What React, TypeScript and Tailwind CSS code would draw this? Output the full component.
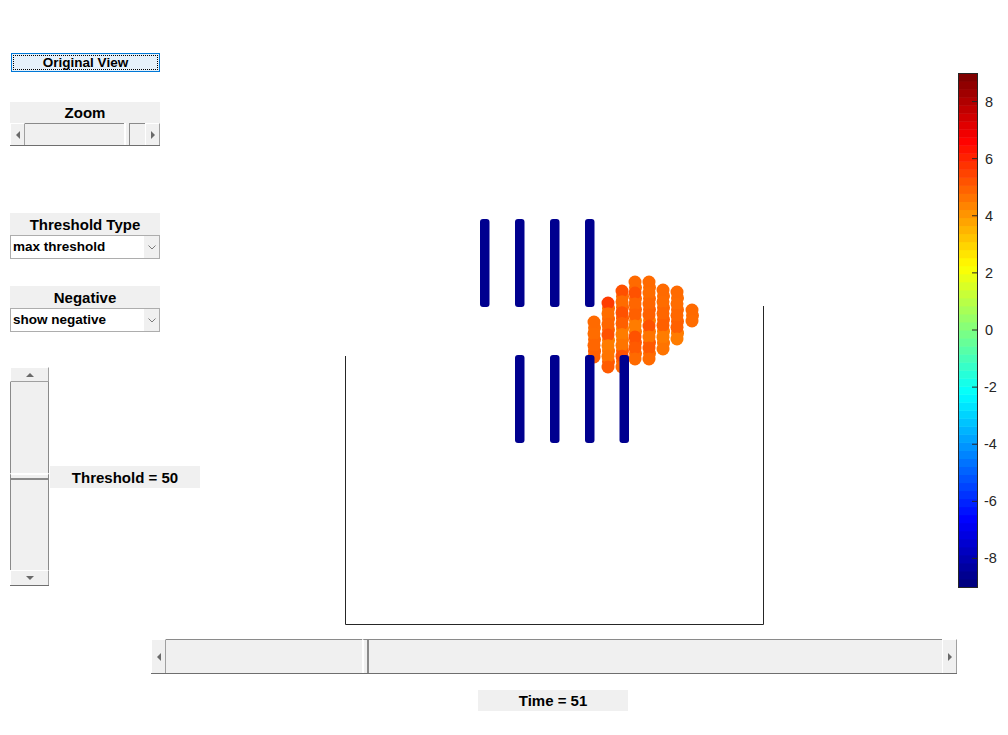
import React from 'react';

const jet = (x: number) => {
  const c = (v: number) => Math.round(Math.max(0, Math.min(1, v)) * 255);
  const r = c(1.5 - Math.abs(4 * x - 3));
  const g = c(1.5 - Math.abs(4 * x - 2));
  const b = c(1.5 - Math.abs(4 * x - 1));
  return `rgb(${r},${g},${b})`;
};

function Arrow({ dir }: { dir: 'l' | 'r' | 'u' | 'd' }) {
  const pts = { l: '4,0 4,8 0,4', r: '0,0 0,8 4,4', u: '0,4 8,4 4,0', d: '0,0 8,0 4,4' }[dir];
  const vert = dir === 'u' || dir === 'd';
  return (
    <svg width={vert ? 8 : 4} height={vert ? 4 : 8} className="block">
      <polygon points={pts} fill="#6a6a6a" />
    </svg>
  );
}

function Label({ text, className }: { text: string; className: string }) {
  return (
    <div className={`bg-[#f0f0f0] flex items-center justify-center text-[15px] font-bold text-black leading-none ${className}`}>
      {text}
    </div>
  );
}

function Select({ value }: { value: string }) {
  return (
    <div className="flex h-[24px] w-[150px] border border-[#adadad] bg-white">
      <div className="flex-1 flex items-center pl-[2px] text-[13.5px] font-bold text-black">{value}</div>
      <div className="w-[15px] bg-[#f0f0f0] flex items-center justify-center">
        <svg width="8" height="5" className="block">
          <polyline points="0.5,0.5 4,4 7.5,0.5" fill="none" stroke="#7a7a7a" strokeWidth="1" />
        </svg>
      </div>
    </div>
  );
}

const btn = 'flex items-center justify-center bg-[#f0f0f0] border-t border-l border-white border-r border-r-[#a0a0a0]';

function ZoomSlider() {
  return (
    <div className="flex h-[23px] w-[150px] bg-[#f0f0f0] border-b border-[#6e6e6e]">
      <div className={`w-[15px] ${btn}`}><Arrow dir="l" /></div>
      <div className="w-[99px] border-t border-[#8a8a8a]" />
      <div className="w-[6px] border-l-2 border-white border-r border-r-[#8a8a8a]" />
      <div className="flex-1 border-t border-[#8a8a8a]" />
      <div className={`w-[15px] ${btn}`}><Arrow dir="r" /></div>
    </div>
  );
}

function TimeSlider() {
  return (
    <div className="flex h-[35px] w-[806px] bg-[#f0f0f0] border-b border-[#6e6e6e]">
      <div className={`w-[15px] ${btn}`}><Arrow dir="l" /></div>
      <div className="w-[196px] border-t border-[#8a8a8a]" />
      <div className="w-[7px] border-l-2 border-white border-r-2 border-r-[#8a8a8a] border-t border-t-[#8a8a8a]" />
      <div className="flex-1 border-t border-[#8a8a8a]" />
      <div className={`w-[15px] ${btn}`}><Arrow dir="r" /></div>
    </div>
  );
}

function ThresholdSlider() {
  return (
    <div className="flex flex-col h-[219px] w-[39px] bg-[#f0f0f0] border-b border-[#6e6e6e]">
      <div className="h-[15px] flex items-center justify-center bg-[#f0f0f0] border-t border-l border-white border-b border-b-[#a0a0a0] border-r border-r-[#a0a0a0]"><Arrow dir="u" /></div>
      <div className="h-[91px] border-l border-r border-[#8a8a8a]" />
      <div className="h-[7px] border-t-2 border-white border-b-2 border-b-[#8a8a8a] border-l border-l-[#8a8a8a] border-r border-r-[#8a8a8a]" />
      <div className="flex-1 border-l border-r border-[#8a8a8a]" />
      <div className="h-[15px] flex items-center justify-center bg-[#f0f0f0] border-t border-white border-l border-l-white border-r border-r-[#a0a0a0]"><Arrow dir="d" /></div>
    </div>
  );
}

function LeftPanel() {
  return (
    <div className="w-[210px] shrink-0 flex flex-col pl-[10px] pt-[53px]">
      <div className="ml-px w-[149px] h-[19px] bg-[#e5f1fb] border border-[#0078d7] p-px">
        <div className="h-full border border-dotted border-black flex items-center justify-center text-[13.5px] font-bold text-black leading-none">
          Original View
        </div>
      </div>
      <Label text="Zoom" className="mt-[30px] w-[150px] h-[21px]" />
      <ZoomSlider />
      <Label text="Threshold Type" className="mt-[67px] w-[150px] h-[22px]" />
      <Select value="max threshold" />
      <Label text="Negative" className="mt-[27px] w-[150px] h-[22px]" />
      <Select value="show negative" />
      <div className="mt-[35px] flex items-start">
        <ThresholdSlider />
        <Label text="Threshold = 50" className="mt-[99px] ml-px w-[150px] h-[22px]" />
      </div>
    </div>
  );
}

const orangeCols: [number, number, number][] = [
  [594, 322, 357],
  [608, 303, 367],
  [622, 291, 367],
  [635, 282, 359],
  [649, 282, 359],
  [663, 290, 349],
  [677, 292, 339],
  [692, 310, 321],
];

const shades = ['#ff6a00', '#ff7400', '#ff6000', '#ff6c00', '#ff5a00', '#ff7c00', '#ff6600'];

function Blob() {
  const back: React.ReactNode[] = [];
  const front: React.ReactNode[] = [];
  orangeCols.forEach(([cx, y0, y1], ci) => {
    const n = Math.max(2, Math.round((y1 - y0) / 11) + 1);
    const step = (y1 - y0) / (n - 1);
    for (let i = 0; i < n; i++) {
      const y = y0 + i * step;
      const h = (ci * 7 + i * 3) % shades.length;
      let fill = shades[h];
      if (i === 0 && ci === 1) fill = '#ff3c00';
      if (i === 0 && ci === 2) fill = '#ff5000';
      if (ci >= 1 && ci <= 4 && i > 0 && i < n - 1 && (i + ci) % 4 === 0) fill = '#ff5200';
      front.push(<circle key={`f${ci}-${i}`} cx={cx} cy={y} r={6.5} fill={fill} />);
      if (i < n - 1) {
        back.push(
          <circle key={`b${ci}-${i}`} cx={cx + 0.5} cy={y + step / 2} r={6.5} fill={shades[(h + 3) % shades.length]} />,
        );
      }
    }
  });
  return (
    <g>
      {back}
      {front}
    </g>
  );
}

const blueTop = [484.5, 519.5, 554.5, 589.5];
const blueBottom = [519.5, 554.5, 589.5, 624];

function Plot() {
  return (
    <svg width="730" height="639" className="block shrink-0">
      <g transform="translate(-210 0)">
        <polyline points="345.5,356 345.5,624.5 763.5,624.5 763.5,306" fill="none" stroke="#262626" strokeWidth="1" />
        <Blob />
        {blueTop.map((x) => (
          <rect key={`t${x}`} x={x - 4.5} y={219} width={9.5} height={88} rx={3} fill="#00008f" />
        ))}
        {blueBottom.map((x) => (
          <rect key={`u${x}`} x={x - 4.5} y={355} width={9.5} height={88} rx={3} fill="#00008f" />
        ))}
      </g>
    </svg>
  );
}

function ColorBar() {
  const top = 73;
  const bottom = 587;
  const h = bottom - top;
  const n = 64;
  const bands = Array.from({ length: n }, (_, i) => {
    const y = bottom - ((i + 1) * h) / n;
    return <rect key={i} x={18} y={y} width={19} height={h / n + 0.5} fill={jet(i / (n - 1))} />;
  });
  const ticks = [8, 6, 4, 2, 0, -2, -4, -6, -8];
  const yOf = (v: number) => bottom - ((v + 9) / 18) * h;
  return (
    <svg width="68" height="639" className="block shrink-0">
      {bands}
      {ticks.map((t) => (
        <g key={t}>
          <line x1={32} x2={37} y1={yOf(t)} y2={yOf(t)} stroke="#262626" strokeWidth="1" />
          <text
            x={t < 0 ? 44 : 45}
            y={yOf(t) + 5}
            fontSize="14.5"
            fill="#262626"
            fontFamily="'Liberation Sans', Arial, sans-serif"
          >
            {t}
          </text>
        </g>
      ))}
      <rect x={18.5} y={top + 0.5} width={19} height={h} fill="none" stroke="#262626" strokeWidth="1" />
    </svg>
  );
}

export default function App() {
  return (
    <div className="w-[1008px] h-[735px] bg-white flex flex-col overflow-hidden font-['Liberation_Sans',Arial,sans-serif]">
      <div className="flex h-[639px]">
        <LeftPanel />
        <Plot />
        <ColorBar />
      </div>
      <div className="pl-[151px]">
        <TimeSlider />
      </div>
      <div className="pl-[478px] pt-[16px]">
        <Label text="Time = 51" className="w-[150px] h-[21px]" />
      </div>
    </div>
  );
}
